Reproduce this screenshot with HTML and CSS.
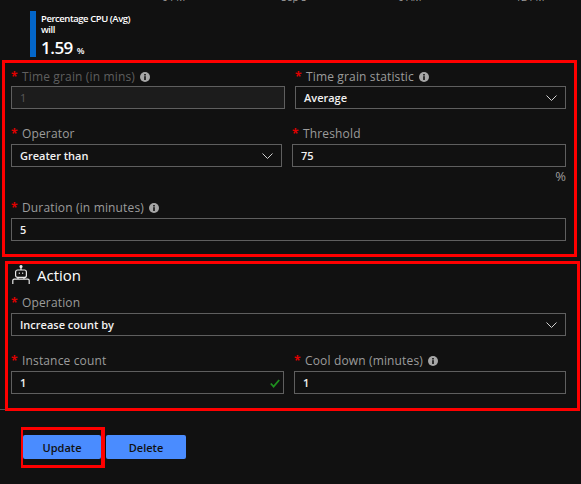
FILE: index.html
```html
<!DOCTYPE html>
<html lang="en">
<head>
<meta charset="UTF-8">
<meta name="viewport" content="width=device-width, initial-scale=1.0">
<title>Scale rule</title>
<link rel="stylesheet" href="styles.css">
</head>
<body>
    <svg class="defs" width="0" height="0">
        <symbol id="info" viewBox="0 0 10 10">
            <circle cx="5" cy="5" r="5" fill="#a6a6a6"/>
            <rect x="4.2" y="4.2" width="1.6" height="3.8" fill="#111"/>
            <rect x="4.2" y="2" width="1.6" height="1.5" fill="#111"/>
        </symbol>
        <symbol id="chevron" viewBox="0 0 11 6">
            <path d="M0.5 0.5 L5.5 5.5 L10.5 0.5" fill="none" stroke="#d0d0d0" stroke-width="1"/>
        </symbol>
    </svg>

    <div class="axis">
        <span class="tick tick-a">6 PM</span>
        <span class="tick tick-b">Sep 3</span>
        <span class="tick tick-c">6 AM</span>
        <span class="tick tick-d">12 PM</span>
    </div>

    <div class="metric">
        <div class="metric-name">Percentage CPU (Avg)</div>
        <div class="metric-name">will</div>
        <div class="metric-value">1.59 <small>%</small></div>
    </div>

    <section class="box box-criteria">
        <div class="row row-first row-wide-left">
            <div class="field">
                <label class="disabled"><i>*</i>Time grain (in mins) <svg class="info"><use href="#info"/></svg></label>
                <input class="input" type="text" value="1" disabled>
            </div>
            <div class="field">
                <label><i>*</i>Time grain statistic <svg class="info"><use href="#info"/></svg></label>
                <div class="input select"><span>Average</span><svg class="chevron"><use href="#chevron"/></svg></div>
            </div>
        </div>
        <div class="row row-wide-right">
            <div class="field">
                <label><i>*</i>Operator</label>
                <div class="input select"><span>Greater than</span><svg class="chevron"><use href="#chevron"/></svg></div>
            </div>
            <div class="field">
                <label><i>*</i>Threshold</label>
                <input class="input" type="text" value="75">
                <div class="unit">%</div>
            </div>
        </div>
        <div class="row row-single">
            <div class="field">
                <label><i>*</i>Duration (in minutes) <svg class="info"><use href="#info"/></svg></label>
                <input class="input" type="text" value="5">
            </div>
        </div>
    </section>

    <section class="box box-action">
        <h2>
            <svg class="robot" viewBox="0 0 18 20" fill="none" stroke="#e8e8e8" stroke-width="1.2">
                <circle cx="9" cy="1.6" r="1" fill="#e8e8e8"/>
                <path d="M9 2.5 V5"/>
                <rect x="3.6" y="5" width="10.8" height="7.4" rx="2"/>
                <path d="M6.8 8.2 H7.8 M10.2 8.2 H11.2" stroke-width="1.6"/>
                <path d="M0.8 19 V15.5 Q0.8 14.2 2.2 14.2 H15.8 Q17.2 14.2 17.2 15.5 V19"/>
                <path d="M6 12.4 V14 M12 12.4 V14"/>
            </svg>
            Action
        </h2>
        <div class="row row-single">
            <div class="field">
                <label><i>*</i>Operation</label>
                <div class="input select"><span>Increase count by</span><svg class="chevron"><use href="#chevron"/></svg></div>
            </div>
        </div>
        <div class="row row-even">
            <div class="field">
                <label><i>*</i>Instance count</label>
                <div class="checked">
                    <input class="input" type="text" value="1">
                    <svg class="check" viewBox="0 0 10 9"><path d="M0.8 4.5 L3.6 7.6 L9.2 1" fill="none" stroke="#1f8f1f" stroke-width="1.8"/></svg>
                </div>
            </div>
            <div class="field">
                <label><i>*</i>Cool down (minutes) <svg class="info"><use href="#info"/></svg></label>
                <input class="input" type="text" value="1">
            </div>
        </div>
    </section>

    <div class="actions">
        <div class="highlight"><button class="btn">Update</button></div>
        <button class="btn btn-delete">Delete</button>
    </div>
</body>
</html>
```

FILE: styles.css
```css
* {
    box-sizing: border-box;
}

html, body {
    height: 100%;
}

body {
    margin: 0;
    overflow: hidden;
    background-color: #111;
    color: #fff;
    font-family: "Open Sans", "Liberation Sans", sans-serif;
    font-size: 12px;
    position: relative;
}

body::after {
    /* thin panel line that peeks out left of the action box */
    content: "";
    position: absolute;
    left: 0;
    top: 409px;
    width: 5px;
    height: 1px;
    background-color: #555;
}

.defs {
    position: absolute;
}

.axis {
    height: 3px;
    overflow: hidden;
    display: flex;
    align-items: flex-end;
    color: #9a9a9a;
    font-size: 10px;
    line-height: 12px;
}

.tick {
    flex: none;
    white-space: nowrap;
}

.tick-a { margin-left: 162px; }
.tick-b { margin-left: 96px; }
.tick-c { margin-left: 91px; }
.tick-d { margin-left: 94px; }

.metric {
    margin: 8px 0 0 30px;
    height: 46px;
    border-left: 6px solid #0366c9;
    padding: 2px 0 0 5px;
}

.metric-name {
    font-size: 9.5px;
    line-height: 11px;
    font-weight: 600;
    letter-spacing: -0.45px;
}

.metric-value {
    margin-top: 1px;
    font-size: 17px;
    line-height: 24px;
    font-weight: 600;
    letter-spacing: -0.5px;
}

.metric-value small {
    font-size: 9px;
}

.box {
    border: 3px solid #f00;
}

.box-criteria {
    margin: 3px 0 0 2px;
    width: 575px;
    height: 197px;
    padding: 4px 0 0 6px;
}

.box-action {
    margin: 4px 0 0 5px;
    width: 575px;
    height: 150px;
    padding: 0 0 0 3px;
}

h2 {
    margin: 0;
    height: 30px;
    padding: 0 0 9px 1px;
    display: flex;
    align-items: center;
    gap: 7px;
    font-size: 15px;
    font-weight: 400;
}

.robot {
    width: 18px;
    height: 20px;
}

.row {
    display: grid;
    column-gap: 10px;
    margin-bottom: 16px;
}

.row-wide-left { grid-template-columns: 274px 271px; }
.row-wide-right { grid-template-columns: 271px 274px; }
.row-single { grid-template-columns: 555px; }
.row-even { grid-template-columns: 273px 272px; }

.field label {
    display: block;
    height: 19px;
    line-height: 17px;
    color: #9c9c9c;
    white-space: nowrap;
    letter-spacing: 0.15px;
}

.row-first .field label {
    line-height: 19px;
}

.field label.disabled {
    color: #5f5f5f;
}

.field label i {
    display: inline-block;
    width: 11px;
    color: #e00000;
    font-style: normal;
    font-weight: 700;
    font-size: 12px;
    letter-spacing: 0;
}

.info {
    width: 10px;
    height: 10px;
    margin-left: 2px;
    vertical-align: -1px;
}

.input {
    display: block;
    width: 100%;
    height: 23px;
    border: 1px solid #5f5f5f;
    background: transparent;
    padding: 0 8px;
    color: #f2f2f2;
    font: inherit;
    font-size: 11px;
    font-weight: 600;
    line-height: 22px;
    border-radius: 0;
}

.input:disabled {
    background-color: #1c1c1c;
    color: #5a5a5a;
    font-weight: 400;
}

.select {
    display: flex;
    align-items: center;
    justify-content: space-between;
}

.chevron {
    width: 11px;
    height: 6px;
}

.checked {
    position: relative;
}

.check {
    position: absolute;
    right: 4px;
    top: 8px;
    width: 10px;
    height: 9px;
}

.unit {
    height: 16px;
    line-height: 18px;
    text-align: right;
    color: #9c9c9c;
    font-size: 13px;
}

.actions {
    margin: 16px 0 0 21px;
    display: flex;
    align-items: flex-start;
}

.highlight {
    width: 84px;
    height: 41px;
    border: solid #f00;
    border-width: 3px 4px 3px 2px;
    padding-top: 5px;
}

.btn {
    display: block;
    height: 24px;
    width: 78px;
    border: none;
    border-radius: 2px;
    background-color: #4a8cff;
    color: #111;
    font: inherit;
    font-size: 11px;
    font-weight: 600;
}

.btn-delete {
    width: 80px;
    margin: 8px 0 0 1px;
}
```
